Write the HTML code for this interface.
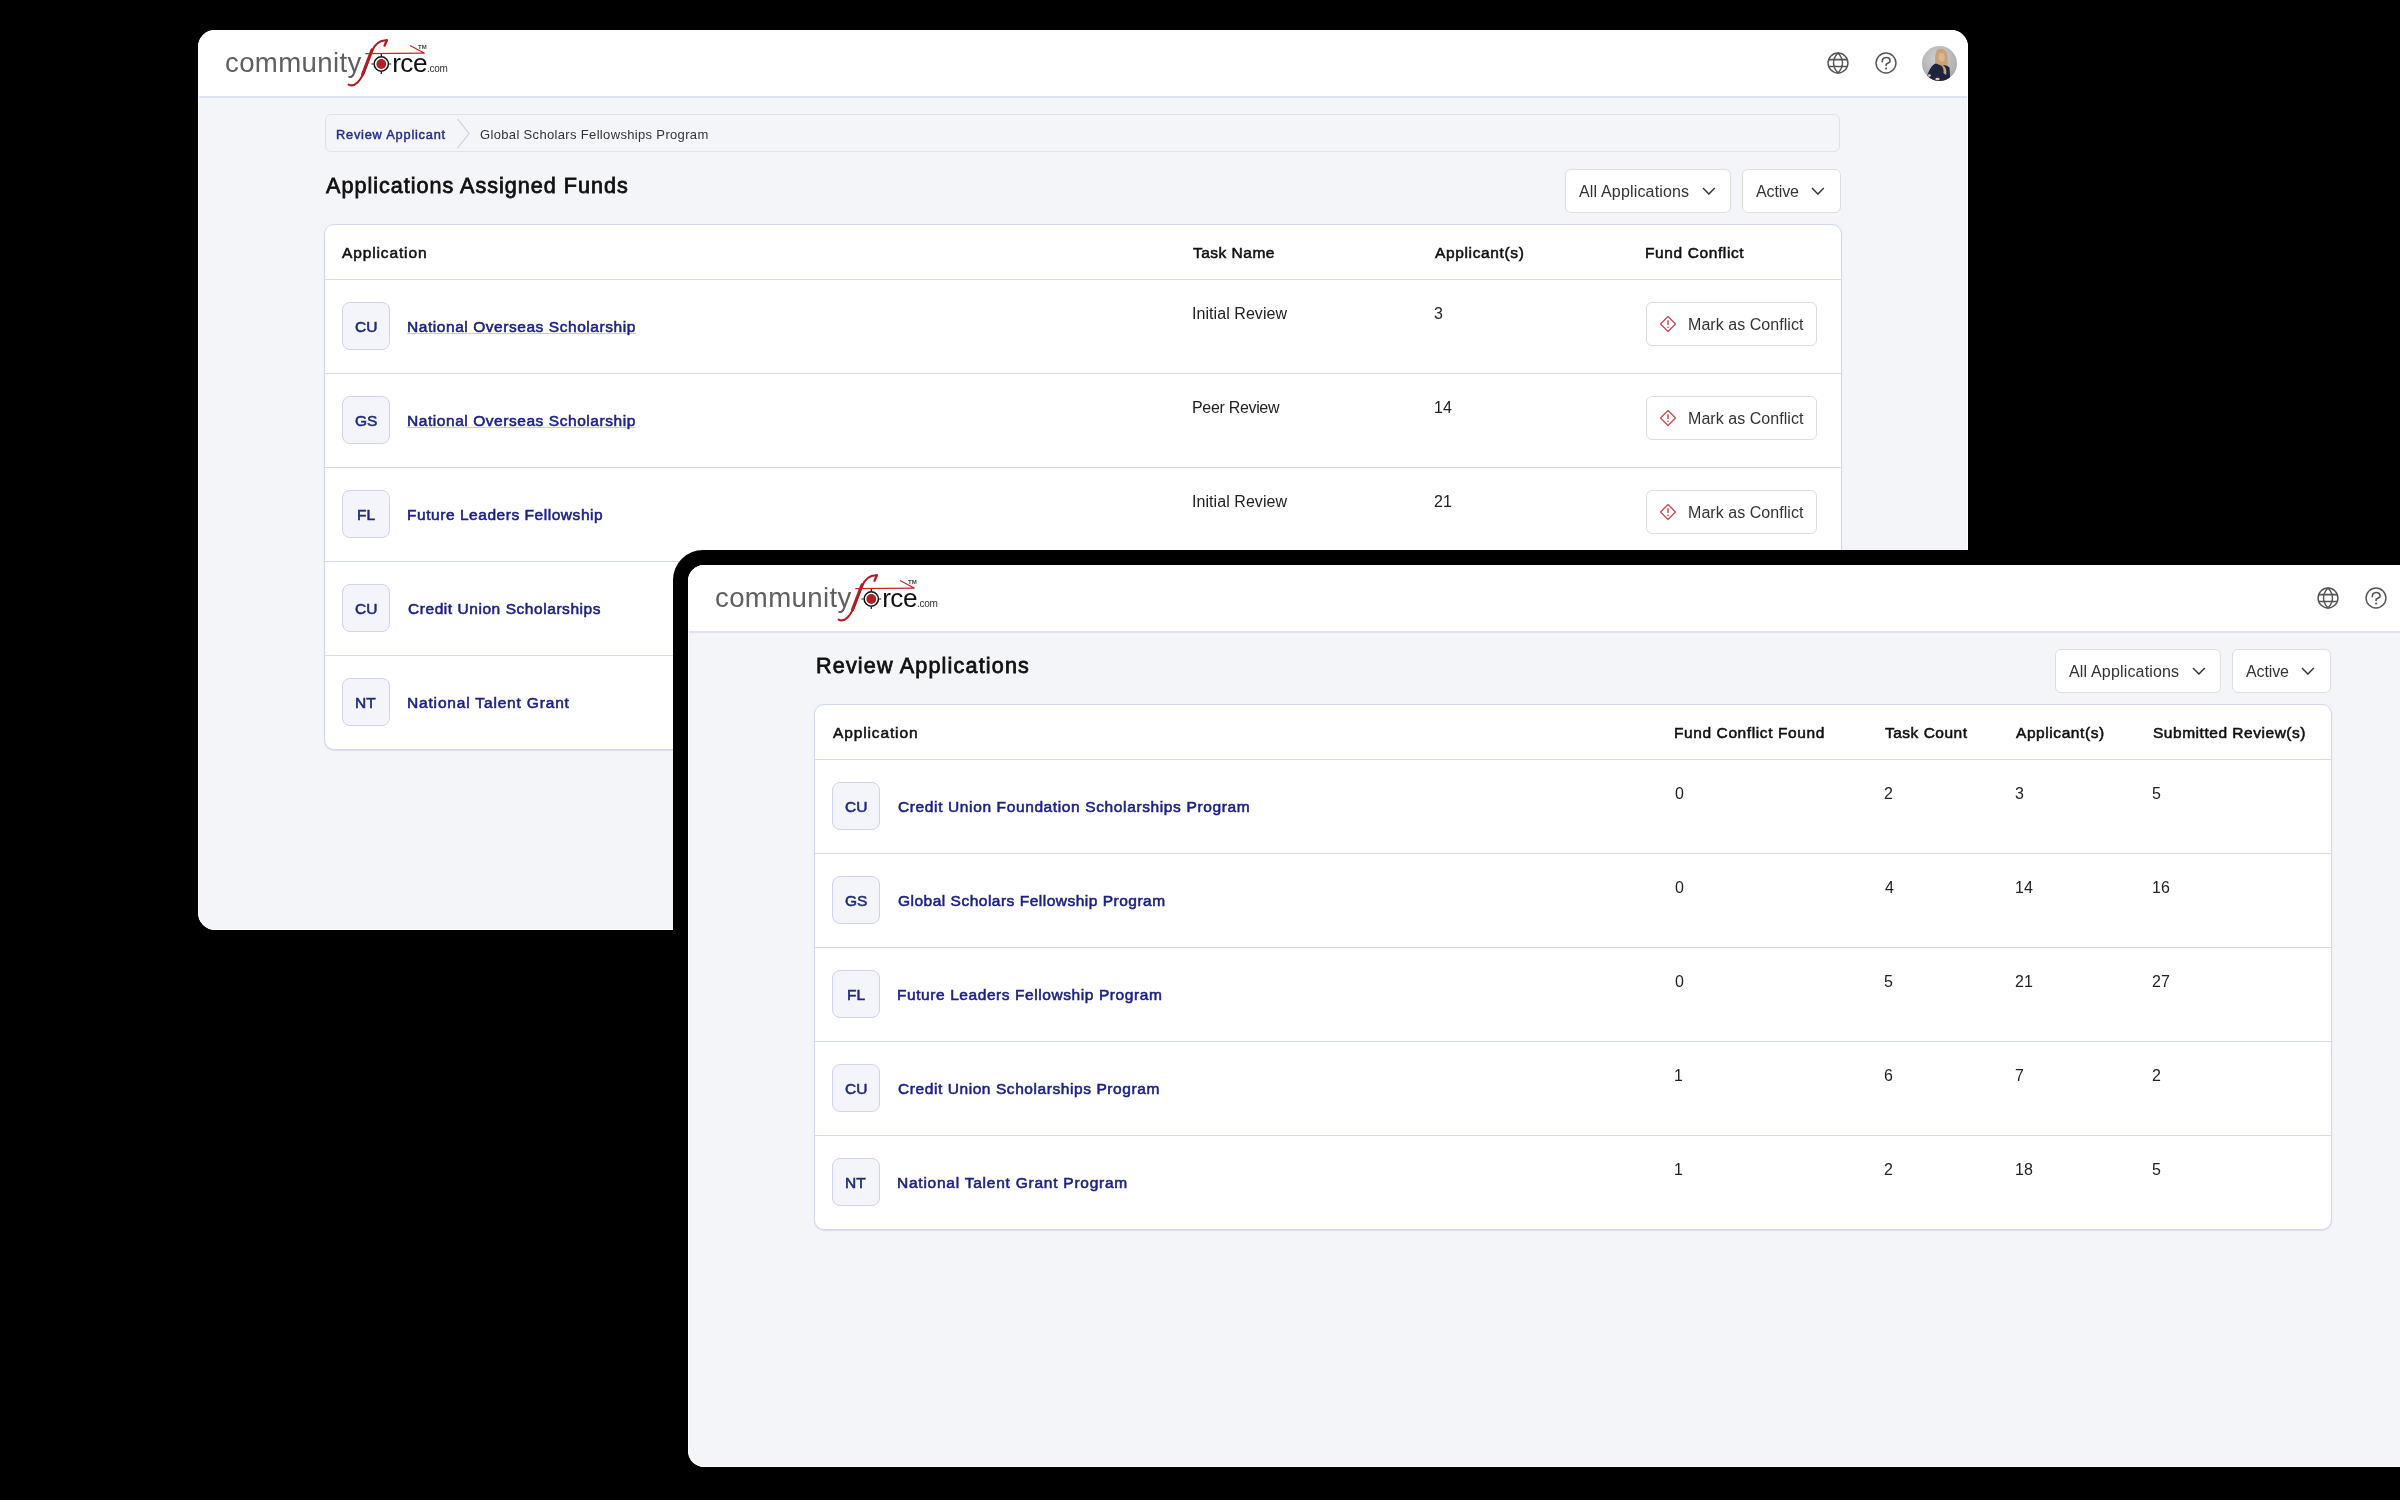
<!DOCTYPE html>
<html><head><meta charset="utf-8"><title>CommunityForce</title><style>
*{margin:0;padding:0;box-sizing:border-box}
html,body{width:2400px;height:1500px;overflow:hidden;background:#000}
body{position:relative;font-family:"Liberation Sans",sans-serif}
.abs{position:absolute;display:block;will-change:transform}
.t{position:absolute;line-height:1;white-space:nowrap;font-family:"Liberation Sans",sans-serif;will-change:transform}
.screen{position:absolute;width:1770px;height:900px;background:#f4f5f9;border-radius:17px;overflow:hidden}
.screen::after{content:"";position:absolute;inset:0;border-radius:inherit;box-shadow:inset 0 0 0 1px #fff;pointer-events:none}
.hdr{position:absolute;left:0;top:0;width:100%;height:68px;background:#fff;border-bottom:2px solid #dfe3f1}
.bc{position:absolute;border:1px solid #e0e1e8;border-radius:6px;background:#f4f5f9}
.dd{position:absolute;background:#fff;border:1.5px solid #dedede;border-radius:6px}
.card{position:absolute;background:#fff;border:1px solid #d3d6f0;border-radius:10px;box-shadow:0 1px 1px rgba(190,194,232,0.45)}
.line{position:absolute;height:1px;background:#d6d9f2}
.badge{position:absolute;width:48px;height:48px;border:1px solid #cfd3ef;border-radius:8px;background:#f4f5fa}
.btn{position:absolute;background:#fff;border:1.5px solid #dcdcdc;border-radius:6px}
.frame{position:absolute;left:673px;top:550px;width:1800px;height:1000px;border-radius:30px;background:#000}
</style></head>
<body>
<div class="screen" style="left:198px;top:30px">
<div class="hdr"></div>
<svg class="abs" style="left:26px;top:6px" width="230" height="56" viewBox="0 0 230 56">
  <text x="1" y="36" font-family="Liberation Sans" font-size="27.6" fill="#606060" letter-spacing="0.35">community</text>
  <g fill="none" stroke="#b01c22" stroke-linecap="round">
   <path d="M124.6 48.6 C 131 51.6, 137 45, 141.5 32 L 147.5 16 C 150.5 8.5, 155.5 4, 162.8 4.3" stroke-width="2.1"/>
   <path d="M138.6 38.5 C 140 35, 141.5 31, 143 27 L 148 14" stroke-width="3.2"/>
   <path d="M162.8 4.3 L 160.6 9.6" stroke-width="2.4"/>
  </g>
  <path d="M141.3 17.6 L 200.5 17.2 L 186 9.5" fill="none" stroke="#c8262b" stroke-width="1.25"/>
  <circle cx="157.3" cy="28" r="7.15" fill="none" stroke="#111" stroke-width="1.5"/>
  <circle cx="157.3" cy="28" r="4.9" fill="#b31f27"/>
  <path d="M147.4 28 h2 M165.2 28 h2 M157.3 18.1 v2 M157.3 35.9 v2" stroke="#111" stroke-width="1.2"/>
  <text x="168.2" y="36" font-family="Liberation Sans" font-size="26.2" fill="#111" letter-spacing="-0.55">rce</text>
  <text x="203" y="35.9" font-family="Liberation Sans" font-size="10" fill="#333" letter-spacing="-0.25">.com</text>
  <text x="194" y="13" font-family="Liberation Sans" font-size="6" font-weight="700" fill="#444">TM</text>
</svg>
<svg class="abs" style="left:1627.7px;top:21.200000000000003px" width="24" height="24" viewBox="0 0 24 24">
 <g fill="none" stroke="#555" stroke-width="1.45">
  <circle cx="12" cy="12" r="9.95"/>
  <path d="M12 2.05 C 9.2 5, 7.5 8.5, 7.5 12 C 7.5 15.5, 9.2 19, 12 21.95 C 14.8 19, 16.5 15.5, 16.5 12 C 16.5 8.5, 14.8 5, 12 2.05 Z"/>
  <path d="M2.8 8.6 H21.2 M2.8 15.4 H21.2" stroke-width="1.55"/>
 </g></svg>
<svg class="abs" style="left:1676.3px;top:21.200000000000003px" width="24" height="24" viewBox="0 0 24 24">
 <g fill="none" stroke="#555" stroke-width="1.45">
  <circle cx="12" cy="12" r="9.95"/>
  <path d="M8.3 10.6 C 8.1 5.3, 16.1 5.2, 16.1 9.9 C 16.1 12.1, 12.1 12.4, 12.1 13.8 V 14.4" stroke-width="1.65" stroke-linecap="round"/>
 </g><circle cx="12.1" cy="17.5" r="1.1" fill="#555"/></svg>
<svg class="abs" style="left:1723.8px;top:15.799999999999997px" width="35" height="35" viewBox="0 0 35 35">
 <defs><radialGradient id="ag" cx="45%" cy="35%" r="65%"><stop offset="0" stop-color="#d2d2d2"/><stop offset="1" stop-color="#aaaaaa"/></radialGradient>
 <clipPath id="ac"><circle cx="17.5" cy="17.5" r="17.5"/></clipPath></defs>
 <circle cx="17.5" cy="17.5" r="17.5" fill="url(#ag)"/>
 <g clip-path="url(#ac)">
  <path d="M15 4 C 19 1.5, 25 3, 25.5 10 L 26 20 C 26 24, 24 26, 22 26 L 14 22 C 12.5 16, 12.5 8, 15 4 Z" fill="#c9a377"/>
  <ellipse cx="19.6" cy="11.2" rx="3.1" ry="4.3" fill="#dfb592"/>
  <path d="M3 36 L 5 30 C 7 24, 10 18.5, 14 17.5 L 19 19.5 C 22 18.5, 25 19.5, 27.5 21.5 L 28.5 36 Z" fill="#1d2440"/>
  <path d="M19.5 18.5 C 23 19.5, 25.5 24, 24 29 L 21.5 27 C 22 24, 21 21, 19.5 20 Z" fill="#c9a377"/>
  <ellipse cx="7.2" cy="29.5" rx="1.6" ry="1.2" fill="#e3c0b0"/>
  <ellipse cx="15.5" cy="33" rx="2.2" ry="1.2" fill="#e3c0b0"/>
 </g></svg>
<div class="bc" style="left:127px;top:84px;width:1515px;height:38px"></div>
<div class="t" style="left:137.90px;top:99.00px;font-size:12.8px;font-weight:400;-webkit-text-stroke:0.454px #262c8c;letter-spacing:0.78px;color:#262c8c;">Review Applicant</div>
<svg class="abs" style="left:258px;top:88px" width="16" height="31" viewBox="0 0 16 31"><path d="M1.5 1 L13 15.5 L1.5 30" fill="none" stroke="#c9cdea" stroke-width="1.2"/></svg>
<div class="t" style="left:282.00px;top:98.00px;font-size:13px;font-weight:400;letter-spacing:0.338px;color:#333;">Global Scholars Fellowships Program</div>
<div class="t" style="left:127.80px;top:145.00px;font-size:21.6px;font-weight:400;-webkit-text-stroke:0.766px #111;letter-spacing:0.988px;color:#111;">Applications Assigned Funds</div>
<div class="dd" style="left:1367px;top:139px;width:166px;height:44px"></div>
<div class="t" style="left:1381.00px;top:154.00px;font-size:16px;font-weight:400;letter-spacing:0.167px;color:#333;">All Applications</div>
<svg class="abs" style="left:1504.3px;top:157.4px" width="13.8" height="8.1" viewBox="-1 -1 13.8 8.1">
 <path d="M0 0 L5.9 6.1 L11.8 0" fill="none" stroke="#333" stroke-width="1.4"/></svg>
<div class="dd" style="left:1544px;top:139px;width:99px;height:44px"></div>
<div class="t" style="left:1557.60px;top:154.00px;font-size:16px;font-weight:400;letter-spacing:-0.12px;color:#333;">Active</div>
<svg class="abs" style="left:1613.3px;top:157.4px" width="13.8" height="8.1" viewBox="-1 -1 13.8 8.1">
 <path d="M0 0 L5.9 6.1 L11.8 0" fill="none" stroke="#333" stroke-width="1.4"/></svg>
<div class="card" style="left:126px;top:193.7px;width:1518px;height:526px"></div>
<div class="t" style="left:143.90px;top:215.00px;font-size:15.5px;font-weight:400;-webkit-text-stroke:0.55px #111;letter-spacing:0.87px;color:#111;">Application</div>
<div class="t" style="left:995.10px;top:215.00px;font-size:15.5px;font-weight:400;-webkit-text-stroke:0.55px #111;letter-spacing:0.488px;color:#111;">Task Name</div>
<div class="t" style="left:1237.00px;top:215.00px;font-size:15.5px;font-weight:400;-webkit-text-stroke:0.55px #111;letter-spacing:0.636px;color:#111;">Applicant(s)</div>
<div class="t" style="left:1447.30px;top:215.00px;font-size:15.5px;font-weight:400;-webkit-text-stroke:0.55px #111;letter-spacing:0.608px;color:#111;">Fund Conflict</div>
<div class="line" style="left:127px;top:249px;width:1516px"></div>
<div class="badge" style="left:144px;top:272px"></div>
<div class="t" style="left:157.00px;top:289.00px;font-size:15.5px;font-weight:400;-webkit-text-stroke:0.55px #1f2a7c;letter-spacing:0.0px;color:#1f2a7c;">CU</div>
<div class="t" style="left:208.50px;top:289.00px;font-size:15.5px;font-weight:400;-webkit-text-stroke:0.55px #1c2185;letter-spacing:0.554px;color:#1c2185;text-decoration:underline;text-decoration-color:#c9cce9;text-underline-offset:0.5px;text-decoration-thickness:1px;-webkit-text-decoration-skip:none;text-decoration-skip-ink:none;">National Overseas Scholarship</div>
<div class="t" style="left:994.10px;top:276.00px;font-size:16px;font-weight:400;letter-spacing:0.062px;color:#222;">Initial Review</div>
<div class="t" style="left:1236.00px;top:276.00px;font-size:16px;font-weight:400;letter-spacing:0.0px;color:#222;">3</div>
<div class="btn" style="left:1448px;top:272px;width:171px;height:44px"></div>
<svg class="abs" style="left:1461px;top:285px" width="18" height="18" viewBox="0 0 18 18">
 <path d="M9 1.5 L16.5 9 L9 16.5 L1.5 9 Z" fill="none" stroke="#cc4a52" stroke-width="1.25" stroke-linejoin="round"/>
 <path d="M9 5.3 V10.1" stroke="#cc4a52" stroke-width="1.5"/><circle cx="9" cy="12.3" r="0.85" fill="#cc4a52"/></svg>
<div class="t" style="left:1490.20px;top:287.00px;font-size:16px;font-weight:400;letter-spacing:0.047px;color:#333;">Mark as Conflict</div>
<div class="line" style="left:127px;top:343px;width:1516px"></div>
<div class="badge" style="left:144px;top:366px"></div>
<div class="t" style="left:157.00px;top:383.00px;font-size:15.5px;font-weight:400;-webkit-text-stroke:0.55px #1f2a7c;letter-spacing:0.0px;color:#1f2a7c;">GS</div>
<div class="t" style="left:208.50px;top:383.00px;font-size:15.5px;font-weight:400;-webkit-text-stroke:0.55px #1c2185;letter-spacing:0.554px;color:#1c2185;text-decoration:underline;text-decoration-color:#c9cce9;text-underline-offset:0.5px;text-decoration-thickness:1px;-webkit-text-decoration-skip:none;text-decoration-skip-ink:none;">National Overseas Scholarship</div>
<div class="t" style="left:994.10px;top:370.00px;font-size:16px;font-weight:400;letter-spacing:-0.32px;color:#222;">Peer Review</div>
<div class="t" style="left:1236.00px;top:370.00px;font-size:16px;font-weight:400;letter-spacing:0.0px;color:#222;">14</div>
<div class="btn" style="left:1448px;top:366px;width:171px;height:44px"></div>
<svg class="abs" style="left:1461px;top:379px" width="18" height="18" viewBox="0 0 18 18">
 <path d="M9 1.5 L16.5 9 L9 16.5 L1.5 9 Z" fill="none" stroke="#cc4a52" stroke-width="1.25" stroke-linejoin="round"/>
 <path d="M9 5.3 V10.1" stroke="#cc4a52" stroke-width="1.5"/><circle cx="9" cy="12.3" r="0.85" fill="#cc4a52"/></svg>
<div class="t" style="left:1490.20px;top:381.00px;font-size:16px;font-weight:400;letter-spacing:0.047px;color:#333;">Mark as Conflict</div>
<div class="line" style="left:127px;top:437px;width:1516px"></div>
<div class="badge" style="left:144px;top:460px"></div>
<div class="t" style="left:158.50px;top:477.00px;font-size:15.5px;font-weight:400;-webkit-text-stroke:0.55px #1f2a7c;letter-spacing:0.0px;color:#1f2a7c;">FL</div>
<div class="t" style="left:208.50px;top:477.00px;font-size:15.5px;font-weight:400;-webkit-text-stroke:0.55px #1c2185;letter-spacing:0.542px;color:#1c2185;">Future Leaders Fellowship</div>
<div class="t" style="left:994.10px;top:464.00px;font-size:16px;font-weight:400;letter-spacing:0.062px;color:#222;">Initial Review</div>
<div class="t" style="left:1236.00px;top:464.00px;font-size:16px;font-weight:400;letter-spacing:0.0px;color:#222;">21</div>
<div class="btn" style="left:1448px;top:460px;width:171px;height:44px"></div>
<svg class="abs" style="left:1461px;top:473px" width="18" height="18" viewBox="0 0 18 18">
 <path d="M9 1.5 L16.5 9 L9 16.5 L1.5 9 Z" fill="none" stroke="#cc4a52" stroke-width="1.25" stroke-linejoin="round"/>
 <path d="M9 5.3 V10.1" stroke="#cc4a52" stroke-width="1.5"/><circle cx="9" cy="12.3" r="0.85" fill="#cc4a52"/></svg>
<div class="t" style="left:1490.20px;top:475.00px;font-size:16px;font-weight:400;letter-spacing:0.047px;color:#333;">Mark as Conflict</div>
<div class="line" style="left:127px;top:531px;width:1516px"></div>
<div class="badge" style="left:144px;top:554px"></div>
<div class="t" style="left:157.00px;top:571.00px;font-size:15.5px;font-weight:400;-webkit-text-stroke:0.55px #1f2a7c;letter-spacing:0.0px;color:#1f2a7c;">CU</div>
<div class="t" style="left:209.50px;top:571.00px;font-size:15.5px;font-weight:400;-webkit-text-stroke:0.55px #1c2185;letter-spacing:0.554px;color:#1c2185;">Credit Union Scholarships</div>
<div class="t" style="left:994.10px;top:558.00px;font-size:16px;font-weight:400;letter-spacing:0.062px;color:#222;">Initial Review</div>
<div class="t" style="left:1236.00px;top:558.00px;font-size:16px;font-weight:400;letter-spacing:0.0px;color:#222;">7</div>
<div class="btn" style="left:1448px;top:554px;width:171px;height:44px"></div>
<svg class="abs" style="left:1461px;top:567px" width="18" height="18" viewBox="0 0 18 18">
 <path d="M9 1.5 L16.5 9 L9 16.5 L1.5 9 Z" fill="none" stroke="#cc4a52" stroke-width="1.25" stroke-linejoin="round"/>
 <path d="M9 5.3 V10.1" stroke="#cc4a52" stroke-width="1.5"/><circle cx="9" cy="12.3" r="0.85" fill="#cc4a52"/></svg>
<div class="t" style="left:1490.20px;top:569.00px;font-size:16px;font-weight:400;letter-spacing:0.047px;color:#333;">Mark as Conflict</div>
<div class="line" style="left:127px;top:625px;width:1516px"></div>
<div class="badge" style="left:144px;top:648px"></div>
<div class="t" style="left:157.00px;top:665.00px;font-size:15.5px;font-weight:400;-webkit-text-stroke:0.55px #1f2a7c;letter-spacing:0.0px;color:#1f2a7c;">NT</div>
<div class="t" style="left:208.50px;top:665.00px;font-size:15.5px;font-weight:400;-webkit-text-stroke:0.55px #1c2185;letter-spacing:0.83px;color:#1c2185;">National Talent Grant</div>
<div class="t" style="left:994.10px;top:652.00px;font-size:16px;font-weight:400;letter-spacing:-0.32px;color:#222;">Peer Review</div>
<div class="t" style="left:1236.00px;top:652.00px;font-size:16px;font-weight:400;letter-spacing:0.0px;color:#222;">18</div>
<div class="btn" style="left:1448px;top:648px;width:171px;height:44px"></div>
<svg class="abs" style="left:1461px;top:661px" width="18" height="18" viewBox="0 0 18 18">
 <path d="M9 1.5 L16.5 9 L9 16.5 L1.5 9 Z" fill="none" stroke="#cc4a52" stroke-width="1.25" stroke-linejoin="round"/>
 <path d="M9 5.3 V10.1" stroke="#cc4a52" stroke-width="1.5"/><circle cx="9" cy="12.3" r="0.85" fill="#cc4a52"/></svg>
<div class="t" style="left:1490.20px;top:663.00px;font-size:16px;font-weight:400;letter-spacing:0.047px;color:#333;">Mark as Conflict</div>
</div>
<div class="frame"></div>
<div class="screen" style="left:688px;top:565px;height:902px;border-radius:16px">
<div class="hdr"></div>
<svg class="abs" style="left:26px;top:6px" width="230" height="56" viewBox="0 0 230 56">
  <text x="1" y="36" font-family="Liberation Sans" font-size="27.6" fill="#606060" letter-spacing="0.35">community</text>
  <g fill="none" stroke="#b01c22" stroke-linecap="round">
   <path d="M124.6 48.6 C 131 51.6, 137 45, 141.5 32 L 147.5 16 C 150.5 8.5, 155.5 4, 162.8 4.3" stroke-width="2.1"/>
   <path d="M138.6 38.5 C 140 35, 141.5 31, 143 27 L 148 14" stroke-width="3.2"/>
   <path d="M162.8 4.3 L 160.6 9.6" stroke-width="2.4"/>
  </g>
  <path d="M141.3 17.6 L 200.5 17.2 L 186 9.5" fill="none" stroke="#c8262b" stroke-width="1.25"/>
  <circle cx="157.3" cy="28" r="7.15" fill="none" stroke="#111" stroke-width="1.5"/>
  <circle cx="157.3" cy="28" r="4.9" fill="#b31f27"/>
  <path d="M147.4 28 h2 M165.2 28 h2 M157.3 18.1 v2 M157.3 35.9 v2" stroke="#111" stroke-width="1.2"/>
  <text x="168.2" y="36" font-family="Liberation Sans" font-size="26.2" fill="#111" letter-spacing="-0.55">rce</text>
  <text x="203" y="35.9" font-family="Liberation Sans" font-size="10" fill="#333" letter-spacing="-0.25">.com</text>
  <text x="194" y="13" font-family="Liberation Sans" font-size="6" font-weight="700" fill="#444">TM</text>
</svg>
<svg class="abs" style="left:1627.7px;top:21.200000000000003px" width="24" height="24" viewBox="0 0 24 24">
 <g fill="none" stroke="#555" stroke-width="1.45">
  <circle cx="12" cy="12" r="9.95"/>
  <path d="M12 2.05 C 9.2 5, 7.5 8.5, 7.5 12 C 7.5 15.5, 9.2 19, 12 21.95 C 14.8 19, 16.5 15.5, 16.5 12 C 16.5 8.5, 14.8 5, 12 2.05 Z"/>
  <path d="M2.8 8.6 H21.2 M2.8 15.4 H21.2" stroke-width="1.55"/>
 </g></svg>
<svg class="abs" style="left:1676.3px;top:21.200000000000003px" width="24" height="24" viewBox="0 0 24 24">
 <g fill="none" stroke="#555" stroke-width="1.45">
  <circle cx="12" cy="12" r="9.95"/>
  <path d="M8.3 10.6 C 8.1 5.3, 16.1 5.2, 16.1 9.9 C 16.1 12.1, 12.1 12.4, 12.1 13.8 V 14.4" stroke-width="1.65" stroke-linecap="round"/>
 </g><circle cx="12.1" cy="17.5" r="1.1" fill="#555"/></svg>
<svg class="abs" style="left:1723.8px;top:15.799999999999997px" width="35" height="35" viewBox="0 0 35 35">
 <defs><radialGradient id="ag" cx="45%" cy="35%" r="65%"><stop offset="0" stop-color="#d2d2d2"/><stop offset="1" stop-color="#aaaaaa"/></radialGradient>
 <clipPath id="ac"><circle cx="17.5" cy="17.5" r="17.5"/></clipPath></defs>
 <circle cx="17.5" cy="17.5" r="17.5" fill="url(#ag)"/>
 <g clip-path="url(#ac)">
  <path d="M15 4 C 19 1.5, 25 3, 25.5 10 L 26 20 C 26 24, 24 26, 22 26 L 14 22 C 12.5 16, 12.5 8, 15 4 Z" fill="#c9a377"/>
  <ellipse cx="19.6" cy="11.2" rx="3.1" ry="4.3" fill="#dfb592"/>
  <path d="M3 36 L 5 30 C 7 24, 10 18.5, 14 17.5 L 19 19.5 C 22 18.5, 25 19.5, 27.5 21.5 L 28.5 36 Z" fill="#1d2440"/>
  <path d="M19.5 18.5 C 23 19.5, 25.5 24, 24 29 L 21.5 27 C 22 24, 21 21, 19.5 20 Z" fill="#c9a377"/>
  <ellipse cx="7.2" cy="29.5" rx="1.6" ry="1.2" fill="#e3c0b0"/>
  <ellipse cx="15.5" cy="33" rx="2.2" ry="1.2" fill="#e3c0b0"/>
 </g></svg>
<div class="t" style="left:127.90px;top:90.00px;font-size:21.6px;font-weight:400;-webkit-text-stroke:0.766px #111;letter-spacing:1.158px;color:#111;">Review Applications</div>
<div class="dd" style="left:1367px;top:84px;width:166px;height:44px"></div>
<div class="t" style="left:1381.00px;top:99.00px;font-size:16px;font-weight:400;letter-spacing:0.167px;color:#333;">All Applications</div>
<svg class="abs" style="left:1504.3px;top:102.4px" width="13.8" height="8.1" viewBox="-1 -1 13.8 8.1">
 <path d="M0 0 L5.9 6.1 L11.8 0" fill="none" stroke="#333" stroke-width="1.4"/></svg>
<div class="dd" style="left:1544px;top:84px;width:99px;height:44px"></div>
<div class="t" style="left:1557.60px;top:99.00px;font-size:16px;font-weight:400;letter-spacing:-0.12px;color:#333;">Active</div>
<svg class="abs" style="left:1613.3px;top:102.4px" width="13.8" height="8.1" viewBox="-1 -1 13.8 8.1">
 <path d="M0 0 L5.9 6.1 L11.8 0" fill="none" stroke="#333" stroke-width="1.4"/></svg>
<div class="card" style="left:126px;top:138.7px;width:1518px;height:526px"></div>
<div class="t" style="left:144.75px;top:160.00px;font-size:15.5px;font-weight:400;-webkit-text-stroke:0.55px #111;letter-spacing:0.87px;color:#111;">Application</div>
<div class="t" style="left:985.80px;top:160.00px;font-size:15.5px;font-weight:400;-webkit-text-stroke:0.55px #111;letter-spacing:0.594px;color:#111;">Fund Conflict Found</div>
<div class="t" style="left:1196.70px;top:160.00px;font-size:15.5px;font-weight:400;-webkit-text-stroke:0.55px #111;letter-spacing:0.5px;color:#111;">Task Count</div>
<div class="t" style="left:1327.90px;top:160.00px;font-size:15.5px;font-weight:400;-webkit-text-stroke:0.55px #111;letter-spacing:0.573px;color:#111;">Applicant(s)</div>
<div class="t" style="left:1464.90px;top:160.00px;font-size:15.5px;font-weight:400;-webkit-text-stroke:0.55px #111;letter-spacing:0.528px;color:#111;">Submitted Review(s)</div>
<div class="line" style="left:127px;top:194px;width:1516px"></div>
<div class="badge" style="left:144px;top:217px"></div>
<div class="t" style="left:157.00px;top:234.00px;font-size:15.5px;font-weight:400;-webkit-text-stroke:0.55px #1f2a7c;letter-spacing:0.0px;color:#1f2a7c;">CU</div>
<div class="t" style="left:209.90px;top:234.00px;font-size:15.5px;font-weight:400;-webkit-text-stroke:0.55px #1c2185;letter-spacing:0.623px;color:#1c2185;">Credit Union Foundation Scholarships Program</div>
<div class="t" style="left:986.80px;top:221.00px;font-size:16px;font-weight:400;letter-spacing:0.0px;color:#222;">0</div>
<div class="t" style="left:1195.70px;top:221.00px;font-size:16px;font-weight:400;letter-spacing:0.0px;color:#222;">2</div>
<div class="t" style="left:1326.90px;top:221.00px;font-size:16px;font-weight:400;letter-spacing:0.0px;color:#222;">3</div>
<div class="t" style="left:1463.90px;top:221.00px;font-size:16px;font-weight:400;letter-spacing:0.0px;color:#222;">5</div>
<div class="line" style="left:127px;top:288px;width:1516px"></div>
<div class="badge" style="left:144px;top:311px"></div>
<div class="t" style="left:157.00px;top:328.00px;font-size:15.5px;font-weight:400;-webkit-text-stroke:0.55px #1f2a7c;letter-spacing:0.0px;color:#1f2a7c;">GS</div>
<div class="t" style="left:209.90px;top:328.00px;font-size:15.5px;font-weight:400;-webkit-text-stroke:0.55px #1c2185;letter-spacing:0.497px;color:#1c2185;">Global Scholars Fellowship Program</div>
<div class="t" style="left:986.80px;top:315.00px;font-size:16px;font-weight:400;letter-spacing:0.0px;color:#222;">0</div>
<div class="t" style="left:1196.70px;top:315.00px;font-size:16px;font-weight:400;letter-spacing:0.0px;color:#222;">4</div>
<div class="t" style="left:1326.90px;top:315.00px;font-size:16px;font-weight:400;letter-spacing:0.0px;color:#222;">14</div>
<div class="t" style="left:1463.90px;top:315.00px;font-size:16px;font-weight:400;letter-spacing:0.0px;color:#222;">16</div>
<div class="line" style="left:127px;top:382px;width:1516px"></div>
<div class="badge" style="left:144px;top:405px"></div>
<div class="t" style="left:158.50px;top:422.00px;font-size:15.5px;font-weight:400;-webkit-text-stroke:0.55px #1f2a7c;letter-spacing:0.0px;color:#1f2a7c;">FL</div>
<div class="t" style="left:208.90px;top:422.00px;font-size:15.5px;font-weight:400;-webkit-text-stroke:0.55px #1c2185;letter-spacing:0.575px;color:#1c2185;">Future Leaders Fellowship Program</div>
<div class="t" style="left:986.80px;top:409.00px;font-size:16px;font-weight:400;letter-spacing:0.0px;color:#222;">0</div>
<div class="t" style="left:1195.70px;top:409.00px;font-size:16px;font-weight:400;letter-spacing:0.0px;color:#222;">5</div>
<div class="t" style="left:1326.90px;top:409.00px;font-size:16px;font-weight:400;letter-spacing:0.0px;color:#222;">21</div>
<div class="t" style="left:1463.90px;top:409.00px;font-size:16px;font-weight:400;letter-spacing:0.0px;color:#222;">27</div>
<div class="line" style="left:127px;top:476px;width:1516px"></div>
<div class="badge" style="left:144px;top:499px"></div>
<div class="t" style="left:157.00px;top:516.00px;font-size:15.5px;font-weight:400;-webkit-text-stroke:0.55px #1f2a7c;letter-spacing:0.0px;color:#1f2a7c;">CU</div>
<div class="t" style="left:209.90px;top:516.00px;font-size:15.5px;font-weight:400;-webkit-text-stroke:0.55px #1c2185;letter-spacing:0.575px;color:#1c2185;">Credit Union Scholarships Program</div>
<div class="t" style="left:985.80px;top:503.00px;font-size:16px;font-weight:400;letter-spacing:0.0px;color:#222;">1</div>
<div class="t" style="left:1195.70px;top:503.00px;font-size:16px;font-weight:400;letter-spacing:0.0px;color:#222;">6</div>
<div class="t" style="left:1326.90px;top:503.00px;font-size:16px;font-weight:400;letter-spacing:0.0px;color:#222;">7</div>
<div class="t" style="left:1463.90px;top:503.00px;font-size:16px;font-weight:400;letter-spacing:0.0px;color:#222;">2</div>
<div class="line" style="left:127px;top:570px;width:1516px"></div>
<div class="badge" style="left:144px;top:593px"></div>
<div class="t" style="left:157.00px;top:610.00px;font-size:15.5px;font-weight:400;-webkit-text-stroke:0.55px #1f2a7c;letter-spacing:0.0px;color:#1f2a7c;">NT</div>
<div class="t" style="left:208.90px;top:610.00px;font-size:15.5px;font-weight:400;-webkit-text-stroke:0.55px #1c2185;letter-spacing:0.757px;color:#1c2185;">National Talent Grant Program</div>
<div class="t" style="left:985.80px;top:597.00px;font-size:16px;font-weight:400;letter-spacing:0.0px;color:#222;">1</div>
<div class="t" style="left:1195.70px;top:597.00px;font-size:16px;font-weight:400;letter-spacing:0.0px;color:#222;">2</div>
<div class="t" style="left:1326.90px;top:597.00px;font-size:16px;font-weight:400;letter-spacing:0.0px;color:#222;">18</div>
<div class="t" style="left:1463.90px;top:597.00px;font-size:16px;font-weight:400;letter-spacing:0.0px;color:#222;">5</div>
</div>
</body></html>
